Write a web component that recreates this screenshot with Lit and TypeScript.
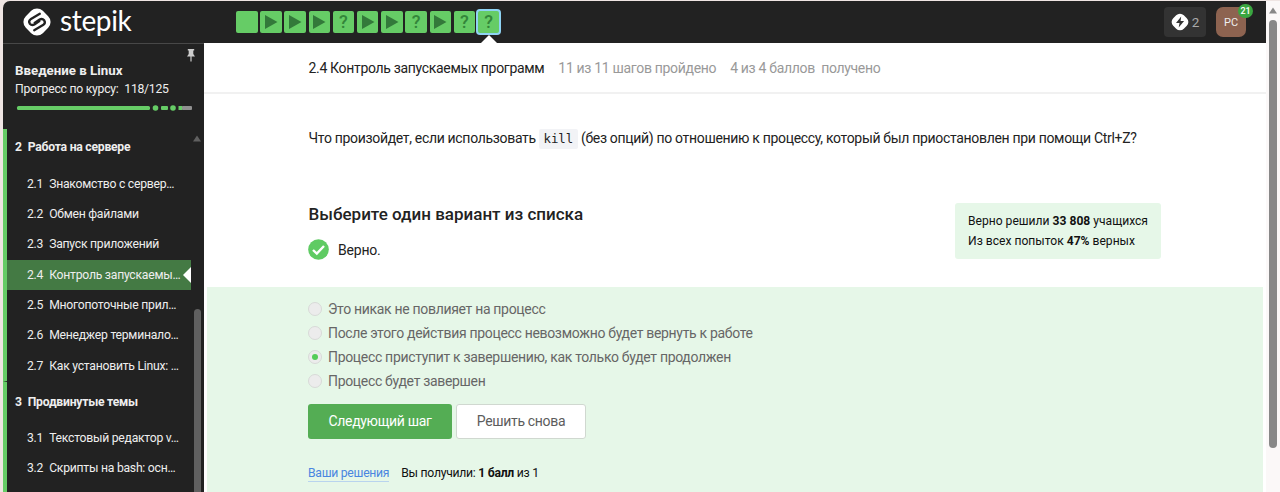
import { LitElement, html, svg, css, nothing } from "lit";
import { customElement } from "lit/decorators.js";
import { classMap } from "lit/directives/class-map.js";

type StepKind = "text" | "video" | "quiz";

const STEPS: StepKind[] = [
  "text", "video", "video", "video", "quiz", "video", "video", "quiz", "video", "quiz", "quiz",
];

const SECTIONS = [
  {
    n: "2",
    title: "Работа на сервере",
    lessons: [
      ["2.1", "Знакомство с сервер…"],
      ["2.2", "Обмен файлами"],
      ["2.3", "Запуск приложений"],
      ["2.4", "Контроль запускаемы…"],
      ["2.5", "Многопоточные прил…"],
      ["2.6", "Менеджер терминало…"],
      ["2.7", "Как установить Linux: …"],
    ],
  },
  {
    n: "3",
    title: "Продвинутые темы",
    lessons: [
      ["3.1", "Текстовый редактор v…"],
      ["3.2", "Скрипты на bash: осн…"],
    ],
  },
];

const OPTIONS = [
  "Это никак не повлияет на процесс",
  "После этого действия процесс невозможно будет вернуть к работе",
  "Процесс приступит к завершению, как только будет продолжен",
  "Процесс будет завершен",
];

@customElement("top-bar")
class TopBar extends LitElement {
  static styles = css`
    :host {
      display: flex;
      height: 42px;
      background: #222;
      border-radius: 7px 0 0 0;
      box-sizing: border-box;
      color: #fff;
    }
    .brand {
      width: 213px;
      box-sizing: content-box;
      padding-left: 20px;
      display: flex;
      align-items: center;
      gap: 9px;
      flex: none;
    }
    .word {
      font: 400 28px/30px Lato, sans-serif;
      letter-spacing: -0.35px;
      margin-top: -5px;
    }
    .steps {
      display: flex;
      gap: 2.7px;
      padding: 10px 0 0 0;
      flex: 1;
    }
    .step {
      width: 21.5px;
      height: 22px;
      border-radius: 2px;
      background: #66cc66;
      display: flex;
      align-items: center;
      justify-content: center;
      position: relative;
      color: #33853a;
      font: 500 18px/24px Roboto, sans-serif;
    }
    .current {
      box-shadow: 0 0 0 2px #8fd3f4;
    }
    .current::after {
      content: "";
      position: absolute;
      left: 3px;
      top: 24px;
      border: 8px solid transparent;
      border-top: 0;
      border-bottom: 8px solid #fff;
    }
    .knowledge {
      width: 42px;
      height: 30px;
      margin: 6px 10px 0 0;
      border-radius: 4px;
      background: #333;
      display: flex;
      align-items: center;
      justify-content: center;
      gap: 3px;
      color: #aaa;
      font: 400 13.5px/30px Roboto, sans-serif;
    }
    .avatar {
      position: relative;
      width: 30px;
      height: 30px;
      margin: 6px 20px 0 0;
      border-radius: 7px;
      background: #8d6350;
      color: #eee;
      font: 400 11px/31px Roboto, sans-serif;
      text-align: center;
    }
    .badge {
      position: absolute;
      left: 22px;
      top: -3px;
      width: 15px;
      height: 14px;
      border-radius: 7px;
      background: #3aa640;
      color: #fff;
      font: 500 9px/14px Roboto, sans-serif;
    }
  `;

  render() {
    return html`
      <div class="brand">
        <svg width="28" height="28" viewBox="0 0 28 28">
          <rect x="2" y="2" width="24" height="24" rx="8.200" fill="#fff" transform="rotate(45 14 14)" />
          <path d="M16.8 5.800 L8 10.900 Q5 12.900 6.800 15.700 Q8.700 17.900 11.400 16.500 L16.400 13.100 M11.200 22.200 L20 17.100 Q23 15.100 21.200 12.300 Q19.300 10.100 16.600 11.500 L11.600 14.900"
            fill="none" stroke="#222" stroke-width="2.300" stroke-linecap="round" />
        </svg>
        <span class="word">stepik</span>
      </div>
      <div class="steps">
        ${STEPS.map(
          (s, i) => html`<div class=${classMap({ step: true, current: i === STEPS.length - 1 })}>
            ${s === "quiz" ? "?" : nothing}
            ${s === "video"
              ? html`<svg width="14" height="16" viewBox="0 0 14 16"><path d="M1 1 L13.5 8 L1 15 Z" fill="#33793a" /></svg>`
              : nothing}
          </div>`
        )}
      </div>
      <div class="knowledge">
        <svg width="18" height="18" viewBox="0 0 18 18">
          <rect x="1.500" y="1.500" width="15" height="15" rx="5.400" fill="#fff" transform="rotate(45 9 9)" />
          <path d="M10.2 3.400 L5 9.900 H8.500 L7.700 14.600 L13.100 8 H9.600 Z" fill="#333" />
        </svg>
        <span>2</span>
      </div>
      <div class="avatar">PC<span class="badge">21</span></div>
    `;
  }
}

@customElement("course-sidebar")
class CourseSidebar extends LitElement {
  static styles = css`
    :host {
      display: flex;
      flex-direction: column;
      width: 200.5px;
      flex: none;
      background: #222;
      border-top: 1px solid #484848;
      box-sizing: border-box;
      color: #eee;
      font: 400 12.2px/20px Roboto, sans-serif;
      letter-spacing: -0.25px;
      position: relative;
      overflow: hidden;
      white-space: nowrap;
    }
    .head {
      height: 85px;
      padding: 17px 10px 0 12px;
      box-sizing: border-box;
      flex: none;
    }
    .course {
      font-weight: 700;
      font-size: 13.3px;
      letter-spacing: 0;
      line-height: 19px;
    }
    .progress {
      line-height: 19px;
    }
    .num {
      margin-left: 3px;
    }
    .bar {
      display: block;
      margin: 6px 0 0 1px;
    }
    .pin {
      position: absolute;
      left: 183px;
      top: 5px;
    }
    .section {
      border-left: 4px solid #66cc66;
    }
    .section + .section {
      border-top: 1px solid #222;
    }
    .section:last-of-type {
      flex: 1;
    }
    .title {
      display: flex;
      gap: 6px;
      padding-left: 8px;
      font-weight: 700;
      height: 39.6px;
      line-height: 37px;
    }
    .section + .section .title {
      height: 41px;
      line-height: 40px;
    }
    .lesson {
      display: flex;
      gap: 6px;
      padding-left: 20px;
      height: 30.35px;
      line-height: 30.8px;
      width: 164px;
      position: relative;
    }
    .active {
      background: #447a44;
    }
    .active::after {
      content: "";
      position: absolute;
      right: 0;
      top: 7px;
      border: 8px solid transparent;
      border-left: 0;
      border-right: 8px solid #fff;
    }
    .up {
      position: absolute;
      left: 190px;
      top: 91px;
    }
    .thumb {
      position: absolute;
      left: 190.5px;
      top: 265px;
      width: 7px;
      height: 200px;
      border-radius: 4px 4px 0 0;
      background: #606060;
    }
  `;

  render() {
    return html`
      <div class="head">
        <div class="course">Введение в Linux</div>
        <div class="progress">Прогресс по курсу: <span class="num">118/125</span></div>
        <svg class="bar" width="178" height="6" viewBox="0 0 178 6">
          <g fill="#66cc66">
            <rect x="1" y="1" width="133" height="4" rx="1.5" />
            <circle cx="139.500" cy="3" r="2.8" />
            <rect x="145" y="1" width="7" height="4" rx="1" />
            <circle cx="157" cy="3" r="2.800" />
            <rect x="162.500" y="1" width="4" height="4" />
          </g>
          <rect x="166" y="1" width="10" height="4" rx="1" fill="#909090" />
        </svg>
      </div>
      <svg class="pin" width="10" height="13" viewBox="0 0 10 13">
        <path d="M1.800 0 H8.200 V1.500 H7.300 V5 L9 7.500 H5.600 V12.500 H4.400 V7.500 H1 L2.700 5 V1.500 H1.800 Z" fill="#ccc" />
      </svg>
      ${SECTIONS.map(
        (s) => html`<section class="section">
          <div class="title"><span>${s.n}</span><span>${s.title}</span></div>
          ${s.lessons.map(
            ([n, t]) => html`<div class=${classMap({ lesson: true, active: n === "2.4" })}>
              <span>${n}</span><span>${t}</span>
            </div>`
          )}
        </section>`
      )}
      <svg class="up" width="8" height="7" viewBox="0 0 8 7"><path d="M4 0.500 L8 6.500 H0 Z" fill="#606060" /></svg>
      <div class="thumb"></div>
    `;
  }
}

@customElement("lesson-step")
class LessonStep extends LitElement {
  static styles = css`
    :host {
      display: flex;
      flex-direction: column;
      flex: 1;
      min-width: 0;
      background: #fff;
      color: #222;
      font: 400 14px/20px Roboto, sans-serif;
      letter-spacing: -0.32px;
      white-space: nowrap;
    }
    .crumbs {
      height: 51px;
      box-sizing: border-box;
      border-bottom: 2px solid #f1f1f1;
      padding-left: 105px;
      line-height: 50px;
      display: flex;
      gap: 14px;
    }
    .muted {
      color: #999;
    }
    .task {
      height: 109px;
      box-sizing: border-box;
      padding: 34px 0 0 105px;
      flex: none;
    }
    .code {
      font: 400 12.4px/20px "DejaVu Sans Mono", monospace;
      letter-spacing: 0;
      background: #f2f3f6;
      padding: 2px 4.5px 3px;
      border-radius: 2px;
    }
    .verdict {
      display: flex;
      justify-content: space-between;
      height: 84px;
      padding: 0 105px 0 105px;
      flex: none;
    }
    .heading {
      font-size: 17px;
      font-weight: 500;
      letter-spacing: 0;
      line-height: 23px;
      height: 24px;
    }
    .ok {
      display: flex;
      align-items: center;
      gap: 9px;
      margin-top: 11px;
      height: 22px;
      line-height: 22px;
    }
    .tick {
      margin-left: -0.5px;
    }
    .okText {
      padding-top: 1px;
      letter-spacing: -0.2px;
    }
    .stats {
      width: 206px;
      height: 56px;
      box-sizing: border-box;
      padding: 8px 13px;
      background: #e6f7e8;
      border-radius: 3px;
      font-size: 12.1px;
      letter-spacing: 0;
      color: #111;
    }
    .answer {
      flex: 1;
      background: #e6f7e8;
      margin: 0 3px 0 3.5px;
      padding: 10px 0 0 101px;
    }
    .option {
      display: flex;
      align-items: center;
      gap: 6px;
      height: 24px;
      color: #666;
    }
    .radio {
      width: 14px;
      height: 14px;
      box-sizing: border-box;
      border-radius: 50%;
      border: 1px solid #d8dad8;
      background: #ececec;
      display: grid;
      place-items: center;
      margin-bottom: 1px;
    }
    .dot {
      width: 6px;
      height: 6px;
      border-radius: 50%;
      background: #54cc58;
    }
    .buttons {
      display: flex;
      gap: 4px;
      margin-top: 11px;
    }
    .btn {
      height: 35px;
      box-sizing: border-box;
      border-radius: 3px;
      text-align: center;
      line-height: 35px;
    }
    .next {
      width: 144px;
      background: #54ad54;
      color: #fff;
    }
    .retry {
      width: 130px;
      background: #fff;
      border: 1px solid #d0d8d0;
      line-height: 33px;
      color: #5c5c5c;
    }
    .result {
      display: flex;
      gap: 12px;
      margin-top: 26px;
      font-size: 12.2px;
      letter-spacing: -0.27px;
      line-height: 16px;
      color: #111;
    }
    .link {
      color: #4a86e0;
      border-bottom: 1px solid #b9d4ee;
    }
  `;

  render() {
    return html`
      <div class="crumbs">
        <span>2.4 Контроль запускаемых программ</span>
        <span class="muted">11 из 11 шагов пройдено</span>
        <span class="muted">4 из 4 баллов &nbsp;получено</span>
      </div>
      <div class="task">
        Что произойдет, если использовать <span class="code">kill</span> (без опций) по отношению к процессу, который
        был приостановлен при помощи Ctrl+Z?
      </div>
      <div class="verdict">
        <div>
          <div class="heading">Выберите один вариант из списка</div>
          <div class="ok">
            <svg class="tick" width="21" height="21" viewBox="0 0 21 21">
              <circle cx="10.500" cy="10.500" r="10.300" fill="#5fcb63" />
              <path d="M5 11 L8.800 14.600 L16 7" fill="none" stroke="#fff" stroke-width="2.400" />
            </svg>
            <span class="okText">Верно.</span>
          </div>
        </div>
        <div class="stats">
          <div>Верно решили <b>33 808</b> учащихся</div>
          <div>Из всех попыток <b>47%</b> верных</div>
        </div>
      </div>
      <div class="answer">
        ${OPTIONS.map(
          (o, i) => html`<div class="option">
            <span class="radio">${i === 2 ? html`<span class="dot"></span>` : nothing}</span><span>${o}</span>
          </div>`
        )}
        <div class="buttons">
          <div class="btn next">Следующий шаг</div>
          <div class="btn retry">Решить снова</div>
        </div>
        <div class="result">
          <span class="link">Ваши решения</span>
          <span>Вы получили: <b>1 балл</b> из 1</span>
        </div>
      </div>
    `;
  }
}

@customElement("app-root")
class AppRoot extends LitElement {
  static styles = css`
    :host {
      display: flex;
      width: 1280px;
      height: 492px;
      box-sizing: border-box;
      padding: 1px 0 0 3px;
      background: #efe5e3;
      overflow: hidden;
    }
    .page {
      width: 1263px;
      display: flex;
      flex-direction: column;
      flex: none;
    }
    .body {
      display: flex;
      flex: 1;
      min-height: 0;
    }
    .scroll {
      width: 14px;
      display: flex;
      flex-direction: column;
      align-items: center;
      background: #fbf8f8;
      padding-top: 6px;
      box-sizing: border-box;
    }
    .thumb {
      width: 8px;
      height: 428px;
      margin-top: 6px;
      margin-right: 1px;
      border-radius: 4px;
      background: #888;
    }
  `;

  render() {
    return html`
      <div class="page">
        <top-bar></top-bar>
        <div class="body">
          <course-sidebar></course-sidebar>
          <lesson-step></lesson-step>
        </div>
      </div>
      <div class="scroll">
        <svg width="10" height="7" viewBox="0 0 10 7">${svg`<path d="M5 0.500 L9 6.500 H1 Z" fill="#888" />`}</svg>
        <div class="thumb"></div>
      </div>
    `;
  }
}
